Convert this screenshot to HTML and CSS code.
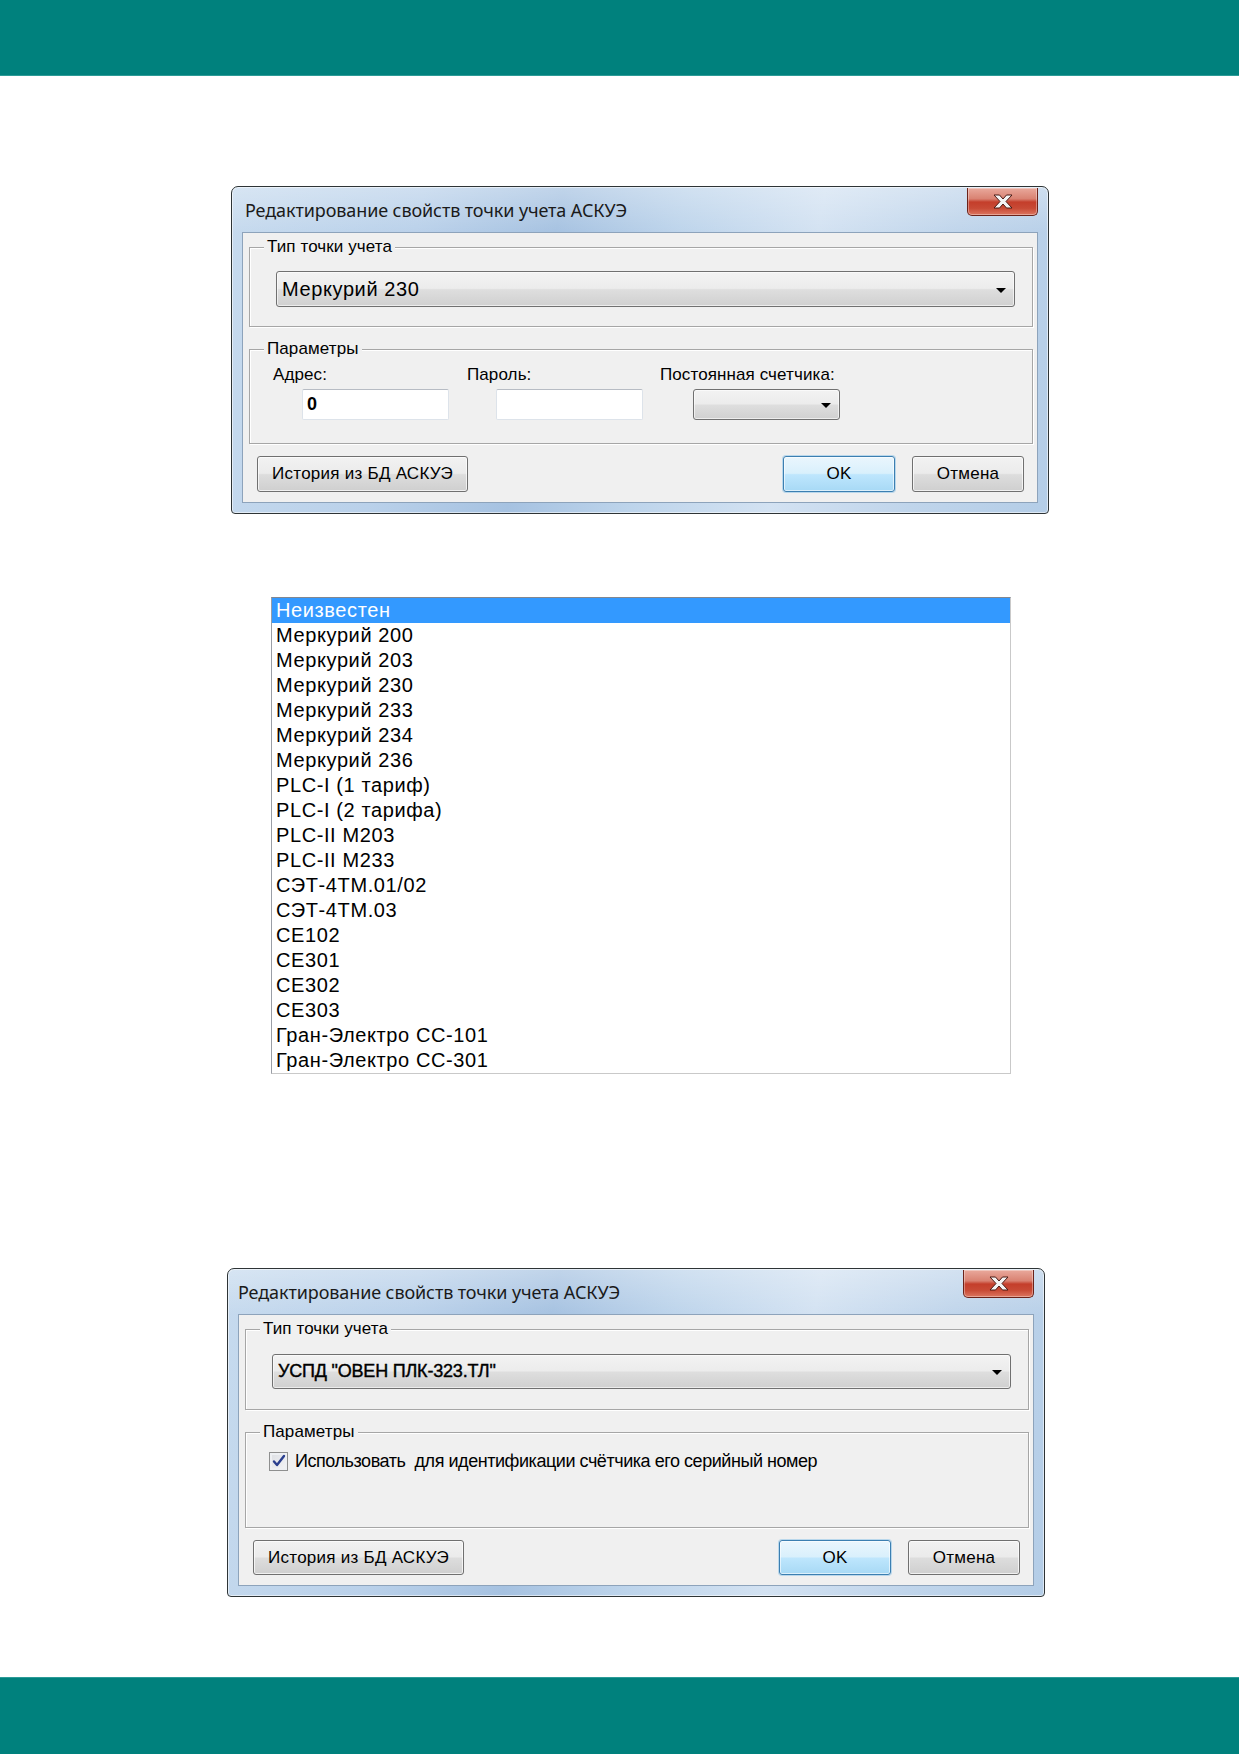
FILE: index.html
```html
<!DOCTYPE html>
<html lang="ru">
<head>
<meta charset="utf-8">
<title>Точки учета АСКУЭ</title>
<link rel="stylesheet" href="styles.css">
</head>
<body>
<header class="topbar"></header>

<main class="content">
  <!-- Dialog: meter point with address / password -->
  <div class="window dlg-a">
    <div class="titlebar">
      <span class="title">Редактирование свойств точки учета АСКУЭ</span>
      <button class="close-btn" type="button" aria-label="Закрыть">
        <svg width="22" height="15" viewBox="0 0 22 15"><path d="M2 1h5.5l3.5 4 3.5-4H20l-6 6.5 6 6.5h-5.5L11 10l-3.5 4H2l6-6.5z" fill="#f4f4f4" stroke="#4a1a14" stroke-width="1"/></svg>
      </button>
    </div>
    <div class="client">
      <div class="group group-type">
        <div class="group-title">Тип точки учета</div>
        <div class="group-body">
          <div class="combo combo-wide">
            <span class="combo-text">Меркурий 230</span>
            <span class="arrow"></span>
          </div>
        </div>
      </div>
      <div class="group group-params">
        <div class="group-title">Параметры</div>
        <div class="group-body param-grid">
          <div class="param">
            <div class="param-label">Адрес:</div>
            <div class="textbox"><span class="textbox-value">0</span></div>
          </div>
          <div class="param">
            <div class="param-label">Пароль:</div>
            <div class="textbox"></div>
          </div>
          <div class="param">
            <div class="param-label">Постоянная счетчика:</div>
            <div class="combo combo-small"><span class="combo-text"></span><span class="arrow"></span></div>
          </div>
        </div>
      </div>
      <div class="button-row">
        <button class="btn btn-history" type="button">История из БД АСКУЭ</button>
        <span class="spacer"></span>
        <button class="btn btn-ok" type="button">OK</button>
        <button class="btn btn-cancel" type="button">Отмена</button>
      </div>
    </div>
  </div>

  <!-- Drop-down list of meter types -->
  <ul class="listbox">
    <li class="item selected">Неизвестен</li>
    <li class="item">Меркурий 200</li>
    <li class="item">Меркурий 203</li>
    <li class="item">Меркурий 230</li>
    <li class="item">Меркурий 233</li>
    <li class="item">Меркурий 234</li>
    <li class="item">Меркурий 236</li>
    <li class="item">PLC-I (1 тариф)</li>
    <li class="item">PLC-I (2 тарифа)</li>
    <li class="item">PLC-II M203</li>
    <li class="item">PLC-II M233</li>
    <li class="item">СЭТ-4ТМ.01/02</li>
    <li class="item">СЭТ-4ТМ.03</li>
    <li class="item">CE102</li>
    <li class="item">CE301</li>
    <li class="item">CE302</li>
    <li class="item">CE303</li>
    <li class="item">Гран-Электро СС-101</li>
    <li class="item">Гран-Электро СС-301</li>
  </ul>

  <!-- Dialog: data concentrator -->
  <div class="window dlg-b">
    <div class="titlebar">
      <span class="title">Редактирование свойств точки учета АСКУЭ</span>
      <button class="close-btn" type="button" aria-label="Закрыть">
        <svg width="22" height="15" viewBox="0 0 22 15"><path d="M2 1h5.5l3.5 4 3.5-4H20l-6 6.5 6 6.5h-5.5L11 10l-3.5 4H2l6-6.5z" fill="#f4f4f4" stroke="#4a1a14" stroke-width="1"/></svg>
      </button>
    </div>
    <div class="client">
      <div class="group group-type">
        <div class="group-title">Тип точки учета</div>
        <div class="group-body">
          <div class="combo combo-wide combo-uspd">
            <span class="combo-text">УСПД "ОВЕН ПЛК-323.ТЛ"</span>
            <span class="arrow"></span>
          </div>
        </div>
      </div>
      <div class="group group-params group-check">
        <div class="group-title">Параметры</div>
        <div class="group-body">
          <label class="check-row">
            <span class="checkbox">
              <svg width="16" height="16" viewBox="0 0 16 16"><path d="M3 8.5l3 3.5 7-9" fill="none" stroke="#2a3f8f" stroke-width="2.4" stroke-linecap="round" stroke-linejoin="round"/></svg>
            </span>
            <span class="check-text">Использовать&nbsp; для идентификации счётчика его серийный номер</span>
          </label>
        </div>
      </div>
      <div class="button-row">
        <button class="btn btn-history" type="button">История из БД АСКУЭ</button>
        <span class="spacer"></span>
        <button class="btn btn-ok" type="button">OK</button>
        <button class="btn btn-cancel" type="button">Отмена</button>
      </div>
    </div>
  </div>
</main>

<footer class="bottombar"></footer>
</body>
</html>
```

FILE: styles.css
```css
* {
  box-sizing: border-box;
}

html, body {
  margin: 0;
  padding: 0;
  background: #ffffff;
}

body {
  min-height: 1754px;
  display: flex;
  flex-direction: column;
  font-family: "Liberation Sans", Arial, sans-serif;
  color: #000;
}

.topbar {
  height: 76px;
  background: #00817d;
  border-bottom: 1px solid #2c9b97;
  flex: none;
}

.bottombar {
  height: 77px;
  background: #00817d;
  border-top: 1px solid #2c9b97;
  flex: none;
}

.content {
  flex: 1;
  display: flex;
  flex-direction: column;
  align-items: flex-start;
}

/* ---------- Window frame (Aero style) ---------- */
.window {
  width: 818px;
  border: 1px solid #2e3436;
  border-radius: 7px 7px 4px 4px;
  padding: 0 10px 10px 10px;
  background:
    linear-gradient(180deg, rgba(255,255,255,0.3) 0%, rgba(255,255,255,0) 46px),
    linear-gradient(100deg, #c6daee 0%, #bad1ea 22%, #a6c2e1 38%, #bdd4eb 52%, #d3e2f2 68%, #c0d5eb 84%, #b4cde7 100%);
  box-shadow: inset 0 0 0 1px rgba(255,255,255,0.55);
}

.dlg-a {
  margin: 110px 0 0 231px;
}

.dlg-b {
  margin: 194px 0 0 227px;
}

.titlebar {
  height: 45px;
  display: flex;
  align-items: flex-start;
}

.title {
  margin: 11px 0 0 3px;
  font-family: "Noto Sans", "Open Sans", sans-serif;
  font-size: 18px;
  line-height: 24px;
  color: #1a1a1a;
  letter-spacing: -0.1px;
}

.dlg-b .title {
  margin-left: 0;
}

.close-btn {
  margin: 1px 0 0 auto;
  width: 71px;
  height: 28px;
  padding: 0;
  border: 1px solid #6b2219;
  border-top: none;
  border-radius: 0 0 5px 5px;
  background: linear-gradient(180deg, #e9a99c 0%, #d98272 40%, #c43e2b 52%, #c84a35 75%, #dc7660 100%);
  box-shadow: inset 0 0 0 1px rgba(255,255,255,0.35);
  display: flex;
  align-items: center;
  justify-content: center;
}

.client {
  background: #f0f0f0;
  border: 1px solid #8da3bb;
  padding: 0 0 10px 0;
}

/* ---------- Group boxes ---------- */
.group {
  border: 1px solid #a6a6a6;
  box-shadow: 1px 1px 0 #ffffff, inset 1px 1px 0 #ffffff;
  margin: 0 4px 0 6px;
}

.group-title {
  width: fit-content;
  margin: -11px 0 0 14px;
  padding: 0 3px;
  background: #f0f0f0;
  font-size: 17px;
  line-height: 20px;
  letter-spacing: 0.1px;
}

.group-type {
  margin-top: 14px;
}

.group-type .group-body {
  padding: 0 17px 19px 26px;
}

.group-params {
  margin-top: 22px;
}

.group-params .group-body {
  padding: 0 17px 23px 23px;
}

/* ---------- Combo boxes ---------- */
.combo {
  display: flex;
  align-items: center;
  border: 1px solid #707070;
  border-radius: 3px;
  background: linear-gradient(180deg, #f3f3f3 0%, #ececec 48%, #dedede 52%, #d0d0d0 100%);
  box-shadow: inset 0 0 0 1px rgba(255,255,255,0.6);
}

.combo-wide {
  height: 36px;
  margin-top: 14px;
  padding: 0 8px 0 5px;
}

.combo-text {
  flex: 1;
  font-size: 20px;
  letter-spacing: 0.6px;
  white-space: nowrap;
}

.arrow {
  width: 0;
  height: 0;
  border-left: 5px solid transparent;
  border-right: 5px solid transparent;
  border-top: 5px solid #000;
  margin-top: 2px;
}

.combo-small {
  width: 147px;
  height: 31px;
  margin-left: 33px;
  padding: 0 8px 0 5px;
}

/* ---------- Parameter fields ---------- */
.param-grid {
  display: grid;
  grid-template-columns: 194px 193px 200px;
}

.param-label {
  font-size: 17px;
  line-height: 20px;
  letter-spacing: 0.1px;
  margin: 6px 0 4px;
  white-space: nowrap;
}

.textbox {
  width: 147px;
  height: 31px;
  margin-left: 29px;
  background: #fff;
  border: 1px solid #dde3ea;
  border-top-color: #b7bcc4;
  border-radius: 2px;
  display: flex;
  align-items: center;
  padding-left: 4px;
}

.textbox-value {
  font-size: 18px;
  font-weight: bold;
}

/* ---------- Checkbox ---------- */
.group-check .group-body {
  padding: 8px 17px 55px 23px;
}

.check-row {
  display: flex;
  align-items: center;
  height: 22px;
}

.checkbox {
  width: 19px;
  height: 19px;
  border: 1px solid #8e8f8f;
  background: linear-gradient(135deg, #dcdee3 0%, #f4f5f7 100%);
  box-shadow: inset 0 0 0 2px #eef0f3;
  display: flex;
  align-items: center;
  justify-content: center;
  margin-right: 7px;
}

.check-text {
  font-size: 18px;
  letter-spacing: -0.45px;
  white-space: nowrap;
}

.combo-uspd {
  height: 35px;
  margin-top: 15px;
}

.dlg-b .group-type .group-body {
  padding-bottom: 20px;
}

.combo-uspd .combo-text {
  font-size: 18px;
  -webkit-text-stroke: 0.4px #000;
  letter-spacing: -0.2px;
}

/* ---------- Buttons ---------- */
.button-row {
  display: flex;
  align-items: center;
  gap: 17px;
  margin-top: 12px;
  padding: 0 13px 0 14px;
}

.spacer {
  flex: 1;
}

.btn {
  height: 36px;
  border: 1px solid #707070;
  border-radius: 3px;
  background: linear-gradient(180deg, #f2f2f2 0%, #ebebeb 48%, #dddddd 52%, #cfcfcf 100%);
  box-shadow: inset 0 0 0 1px rgba(255,255,255,0.7);
  font-family: "Liberation Sans", Arial, sans-serif;
  font-size: 17px;
  letter-spacing: 0.25px;
  color: #000;
  padding: 0;
}

.btn-history {
  width: 211px;
}

.btn-ok {
  width: 112px;
  border-color: #3c7fb1;
  background: linear-gradient(180deg, #eaf6fd 0%, #d9f0fc 48%, #bee6fd 52%, #a7d9f5 100%);
  box-shadow: inset 0 0 0 1px rgba(255,255,255,0.6), 0 0 0 1px rgba(84,170,226,0.35);
}

.btn-cancel {
  width: 112px;
}

.dlg-b .btn {
  height: 35px;
}

/* ---------- List box ---------- */
.listbox {
  list-style: none;
  margin: 83px 0 0 271px;
  padding: 0;
  width: 740px;
  background: #fff;
  border: 1px solid #c9c9c9;
  border-top-color: #828790;
  border-left-color: #9a9ea6;
}

.item {
  height: 25px;
  line-height: 25px;
  padding-left: 4px;
  font-size: 20px;
  letter-spacing: 0.6px;
  white-space: nowrap;
}

.item.selected {
  background: #3399ff;
  color: #fff;
}
```
